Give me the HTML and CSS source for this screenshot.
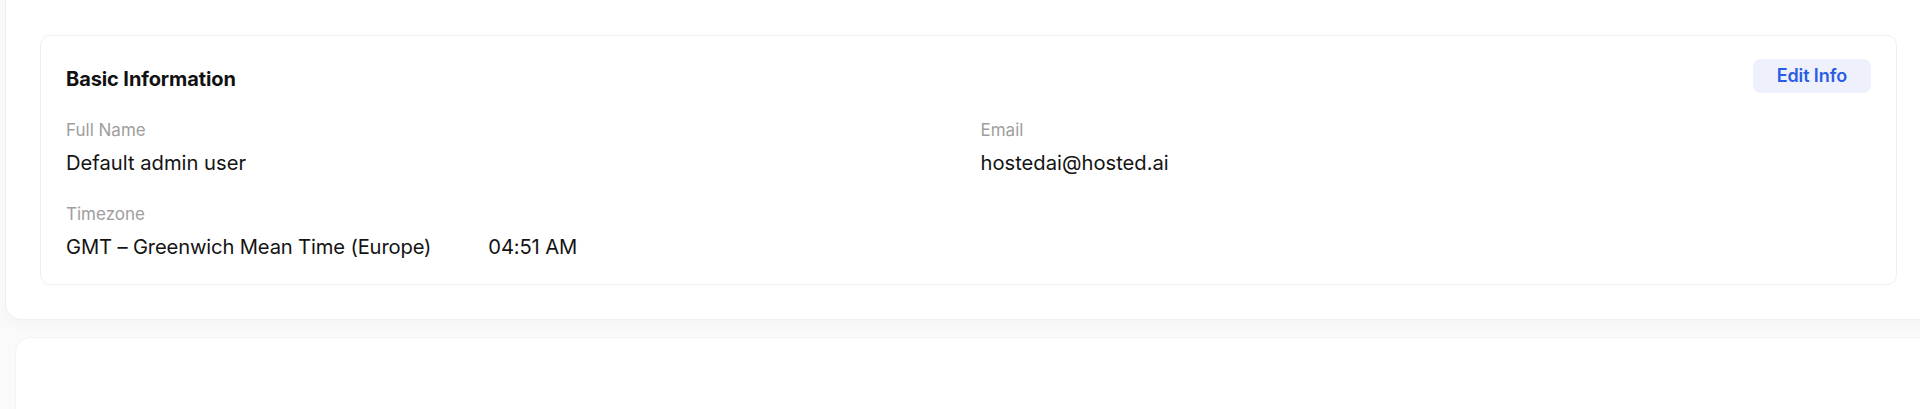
FILE: index.html
```html
<!DOCTYPE html>
<html lang="en">
<head>
<meta charset="utf-8">
<title>Profile</title>
<link rel="stylesheet" href="styles.css">
</head>
<body>
<main class="page">
  <section class="panel">
    <div class="info-card">
      <div class="info-header">
        <h2 class="info-title">Basic Information</h2>
        <button class="edit-btn" type="button">Edit Info</button>
      </div>
      <div class="fields">
        <div class="field">
          <div class="field-label">Full Name</div>
          <div class="field-value">Default admin user</div>
        </div>
        <div class="field">
          <div class="field-label">Email</div>
          <div class="field-value">hostedai@hosted.ai</div>
        </div>
        <div class="field">
          <div class="field-label">Timezone</div>
          <div class="field-value tz">
            <span>GMT – Greenwich Mean Time (Europe)</span>
            <span>04:51 AM</span>
          </div>
        </div>
      </div>
    </div>
  </section>
  <section class="panel-next"></section>
</main>
</body>
</html>
```

FILE: styles.css
```css
* { box-sizing: border-box; }

html, body {
  margin: 0;
  padding: 0;
  overflow: hidden;
}

body {
  background: #fafafa;
  font-family: "Inter", "Noto Sans", sans-serif;
  color: #141414;
  height: 409px;
}

.page {
  display: flex;
  flex-direction: column;
  height: 409px;
  overflow: hidden;
}

.panel {
  flex: none;
  background: #ffffff;
  margin: 0 -12px 0 5px;
  padding: 35px 34px 34px 34px;
  border: 1px solid #efefef;
  border-top: none;
  border-radius: 0 0 16px 16px;
  box-shadow: 0 6px 14px rgba(0, 0, 0, 0.025);
}

.info-card {
  border: 1px solid #efefef;
  border-radius: 10px;
  padding: 23px 25px 23px 25px;
  background: #ffffff;
}

.info-header {
  display: flex;
  justify-content: space-between;
  align-items: center;
  height: 34px;
}

.info-title {
  margin: 0;
  padding-top: 5px;
  font-size: 20px;
  line-height: 28px;
  font-weight: 700;
  color: #111111;
  letter-spacing: -0.1px;
}

.edit-btn {
  height: 34px;
  padding: 0 24px;
  border: none;
  border-radius: 8px;
  background: #eef1fc;
  color: #2b5ce6;
  font-family: inherit;
  font-size: 18px;
  font-weight: 600;
  line-height: 34px;
  letter-spacing: -0.1px;
  cursor: pointer;
}

.fields {
  margin-top: 25px;
  display: grid;
  grid-template-columns: 1fr 1fr;
  column-gap: 24px;
  row-gap: 25px;
}

.field-label {
  font-size: 17px;
  line-height: 24px;
  color: #9e9e9e;
}

.field-value {
  margin-top: 7px;
  font-size: 20.2px;
  line-height: 28px;
  color: #141414;
  letter-spacing: 0;
}

.tz {
  display: flex;
  gap: 57px;
  letter-spacing: -0.15px;
}

.panel-next {
  flex: 1 1 auto;
  margin: 17px -20px 0 15px;
  background: #ffffff;
  border: 1px solid #f3f3f3;
  border-bottom: none;
  border-radius: 16px 0 0 0;
}
```
